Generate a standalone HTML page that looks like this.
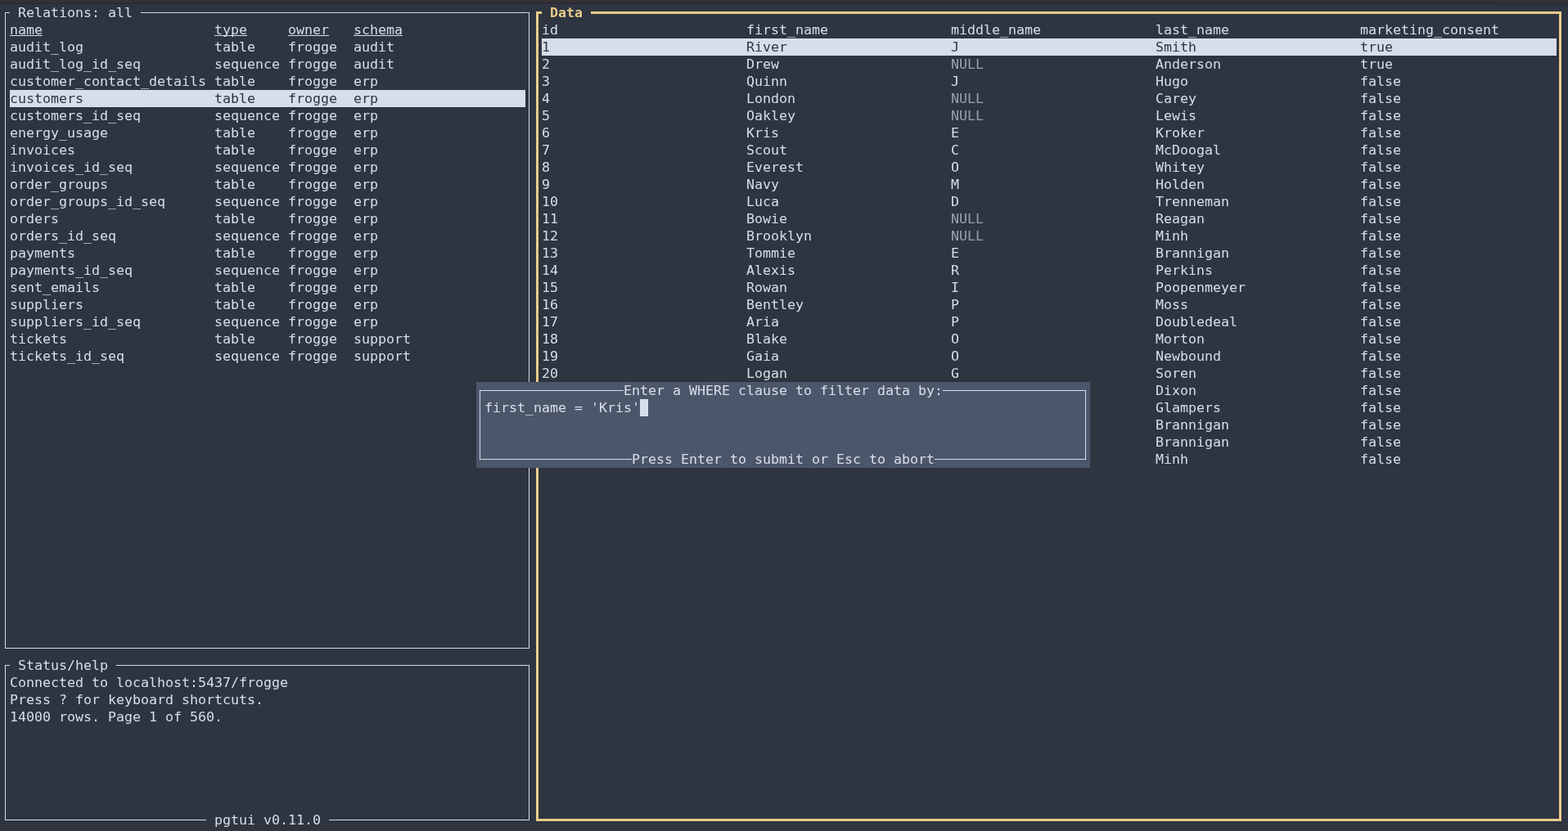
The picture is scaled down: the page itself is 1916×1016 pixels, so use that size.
<!DOCTYPE html>
<html lang="en"><head><meta charset="utf-8"><title>pgtui</title>
<style>
html,body{margin:0;padding:0;background:#2e3440;}
body{width:1916px;height:1016px;position:relative;overflow:hidden;
 font-family:"DejaVu Sans Mono","Liberation Mono",monospace;font-size:16.61px;color:#d8dee9;}
.r{position:absolute;}
.t{position:absolute;display:block;white-space:pre;
  height:21px;line-height:21px;letter-spacing:0px;font-kerning:none;font-variant-ligatures:none;}
.u{text-decoration:underline;text-decoration-thickness:1px;text-underline-offset:1px;text-decoration-skip-ink:none;}
.sel{color:#2e3440;}
.dim{color:#9ba1ad;}
.title{color:#ebcb8b;font-weight:bold;}
section{display:contents;}
main{position:absolute;left:0;top:0;width:1916px;height:1016px;will-change:transform;}
</style></head>
<body>
<main>
<div class="r" style="left:0px;top:0px;width:1916px;height:3px;background:#333333"></div>
<div class="r" style="left:0px;top:3px;width:1916px;height:2px;background:#30283a"></div>
<div class="r" style="left:1830px;top:3px;width:86px;height:1px;background:#333333"></div>
<section class="panel relations">
<div class="r" style="left:6px;top:15px;width:6px;height:1px;background:#d8dee9"></div>
<span class="t" style="left:22px;top:5px">Relations: all</span>
<div class="r" style="left:172px;top:15px;width:475px;height:1px;background:#d8dee9"></div>
<div class="r" style="left:6px;top:15px;width:1px;height:778px;background:#d8dee9"></div>
<div class="r" style="left:646px;top:15px;width:1px;height:778px;background:#d8dee9"></div>
<div class="r" style="left:6px;top:792px;width:641px;height:1px;background:#d8dee9"></div>
<span class="t u" style="left:12px;top:26px">name</span>
<span class="t u" style="left:262px;top:26px">type</span>
<span class="t u" style="left:352px;top:26px">owner</span>
<span class="t u" style="left:432px;top:26px">schema</span>
<span class="t" style="left:12px;top:47px">audit_log</span>
<span class="t" style="left:262px;top:47px">table</span>
<span class="t" style="left:352px;top:47px">frogge</span>
<span class="t" style="left:432px;top:47px">audit</span>
<span class="t" style="left:12px;top:68px">audit_log_id_seq</span>
<span class="t" style="left:262px;top:68px">sequence</span>
<span class="t" style="left:352px;top:68px">frogge</span>
<span class="t" style="left:432px;top:68px">audit</span>
<span class="t" style="left:12px;top:89px">customer_contact_details</span>
<span class="t" style="left:262px;top:89px">table</span>
<span class="t" style="left:352px;top:89px">frogge</span>
<span class="t" style="left:432px;top:89px">erp</span>
<div class="r" style="left:12px;top:110px;width:630px;height:21px;background:#d8dee9"></div>
<span class="t sel" style="left:12px;top:110px">customers</span>
<span class="t sel" style="left:262px;top:110px">table</span>
<span class="t sel" style="left:352px;top:110px">frogge</span>
<span class="t sel" style="left:432px;top:110px">erp</span>
<span class="t" style="left:12px;top:131px">customers_id_seq</span>
<span class="t" style="left:262px;top:131px">sequence</span>
<span class="t" style="left:352px;top:131px">frogge</span>
<span class="t" style="left:432px;top:131px">erp</span>
<span class="t" style="left:12px;top:152px">energy_usage</span>
<span class="t" style="left:262px;top:152px">table</span>
<span class="t" style="left:352px;top:152px">frogge</span>
<span class="t" style="left:432px;top:152px">erp</span>
<span class="t" style="left:12px;top:173px">invoices</span>
<span class="t" style="left:262px;top:173px">table</span>
<span class="t" style="left:352px;top:173px">frogge</span>
<span class="t" style="left:432px;top:173px">erp</span>
<span class="t" style="left:12px;top:194px">invoices_id_seq</span>
<span class="t" style="left:262px;top:194px">sequence</span>
<span class="t" style="left:352px;top:194px">frogge</span>
<span class="t" style="left:432px;top:194px">erp</span>
<span class="t" style="left:12px;top:215px">order_groups</span>
<span class="t" style="left:262px;top:215px">table</span>
<span class="t" style="left:352px;top:215px">frogge</span>
<span class="t" style="left:432px;top:215px">erp</span>
<span class="t" style="left:12px;top:236px">order_groups_id_seq</span>
<span class="t" style="left:262px;top:236px">sequence</span>
<span class="t" style="left:352px;top:236px">frogge</span>
<span class="t" style="left:432px;top:236px">erp</span>
<span class="t" style="left:12px;top:257px">orders</span>
<span class="t" style="left:262px;top:257px">table</span>
<span class="t" style="left:352px;top:257px">frogge</span>
<span class="t" style="left:432px;top:257px">erp</span>
<span class="t" style="left:12px;top:278px">orders_id_seq</span>
<span class="t" style="left:262px;top:278px">sequence</span>
<span class="t" style="left:352px;top:278px">frogge</span>
<span class="t" style="left:432px;top:278px">erp</span>
<span class="t" style="left:12px;top:299px">payments</span>
<span class="t" style="left:262px;top:299px">table</span>
<span class="t" style="left:352px;top:299px">frogge</span>
<span class="t" style="left:432px;top:299px">erp</span>
<span class="t" style="left:12px;top:320px">payments_id_seq</span>
<span class="t" style="left:262px;top:320px">sequence</span>
<span class="t" style="left:352px;top:320px">frogge</span>
<span class="t" style="left:432px;top:320px">erp</span>
<span class="t" style="left:12px;top:341px">sent_emails</span>
<span class="t" style="left:262px;top:341px">table</span>
<span class="t" style="left:352px;top:341px">frogge</span>
<span class="t" style="left:432px;top:341px">erp</span>
<span class="t" style="left:12px;top:362px">suppliers</span>
<span class="t" style="left:262px;top:362px">table</span>
<span class="t" style="left:352px;top:362px">frogge</span>
<span class="t" style="left:432px;top:362px">erp</span>
<span class="t" style="left:12px;top:383px">suppliers_id_seq</span>
<span class="t" style="left:262px;top:383px">sequence</span>
<span class="t" style="left:352px;top:383px">frogge</span>
<span class="t" style="left:432px;top:383px">erp</span>
<span class="t" style="left:12px;top:404px">tickets</span>
<span class="t" style="left:262px;top:404px">table</span>
<span class="t" style="left:352px;top:404px">frogge</span>
<span class="t" style="left:432px;top:404px">support</span>
<span class="t" style="left:12px;top:425px">tickets_id_seq</span>
<span class="t" style="left:262px;top:425px">sequence</span>
<span class="t" style="left:352px;top:425px">frogge</span>
<span class="t" style="left:432px;top:425px">support</span>
</section>
<section class="panel status">
<div class="r" style="left:6px;top:813px;width:6px;height:1px;background:#d8dee9"></div>
<span class="t" style="left:22px;top:803px">Status/help</span>
<div class="r" style="left:142px;top:813px;width:505px;height:1px;background:#d8dee9"></div>
<div class="r" style="left:6px;top:813px;width:1px;height:190px;background:#d8dee9"></div>
<div class="r" style="left:646px;top:813px;width:1px;height:190px;background:#d8dee9"></div>
<div class="r" style="left:6px;top:1002px;width:246px;height:1px;background:#d8dee9"></div>
<span class="t" style="left:262px;top:992px">pgtui v0.11.0</span>
<div class="r" style="left:402px;top:1002px;width:245px;height:1px;background:#d8dee9"></div>
<span class="t" style="left:12px;top:824px">Connected to localhost:5437/frogge</span>
<span class="t" style="left:12px;top:845px">Press ? for keyboard shortcuts.</span>
<span class="t" style="left:12px;top:866px">14000 rows. Page 1 of 560.</span>
</section>
<section class="panel data">
<div class="r" style="left:655px;top:14px;width:7px;height:3px;background:#ebcb8b"></div>
<span class="t title" style="left:672px;top:5px">Data</span>
<div class="r" style="left:722px;top:14px;width:1186px;height:3px;background:#ebcb8b"></div>
<div class="r" style="left:655px;top:14px;width:3px;height:990px;background:#ebcb8b"></div>
<div class="r" style="left:1905px;top:14px;width:3px;height:990px;background:#ebcb8b"></div>
<div class="r" style="left:655px;top:1001px;width:1253px;height:3px;background:#ebcb8b"></div>
<span class="t" style="left:662px;top:26px">id</span>
<span class="t" style="left:912px;top:26px">first_name</span>
<span class="t" style="left:1162px;top:26px">middle_name</span>
<span class="t" style="left:1412px;top:26px">last_name</span>
<span class="t" style="left:1662px;top:26px">marketing_consent</span>
<div class="r" style="left:662px;top:47px;width:1240px;height:21px;background:#d8dee9"></div>
<span class="t sel" style="left:662px;top:47px">1</span>
<span class="t sel" style="left:912px;top:47px">River</span>
<span class="t sel" style="left:1162px;top:47px">J</span>
<span class="t sel" style="left:1412px;top:47px">Smith</span>
<span class="t sel" style="left:1662px;top:47px">true</span>
<span class="t" style="left:662px;top:68px">2</span>
<span class="t" style="left:912px;top:68px">Drew</span>
<span class="t dim" style="left:1162px;top:68px">NULL</span>
<span class="t" style="left:1412px;top:68px">Anderson</span>
<span class="t" style="left:1662px;top:68px">true</span>
<span class="t" style="left:662px;top:89px">3</span>
<span class="t" style="left:912px;top:89px">Quinn</span>
<span class="t" style="left:1162px;top:89px">J</span>
<span class="t" style="left:1412px;top:89px">Hugo</span>
<span class="t" style="left:1662px;top:89px">false</span>
<span class="t" style="left:662px;top:110px">4</span>
<span class="t" style="left:912px;top:110px">London</span>
<span class="t dim" style="left:1162px;top:110px">NULL</span>
<span class="t" style="left:1412px;top:110px">Carey</span>
<span class="t" style="left:1662px;top:110px">false</span>
<span class="t" style="left:662px;top:131px">5</span>
<span class="t" style="left:912px;top:131px">Oakley</span>
<span class="t dim" style="left:1162px;top:131px">NULL</span>
<span class="t" style="left:1412px;top:131px">Lewis</span>
<span class="t" style="left:1662px;top:131px">false</span>
<span class="t" style="left:662px;top:152px">6</span>
<span class="t" style="left:912px;top:152px">Kris</span>
<span class="t" style="left:1162px;top:152px">E</span>
<span class="t" style="left:1412px;top:152px">Kroker</span>
<span class="t" style="left:1662px;top:152px">false</span>
<span class="t" style="left:662px;top:173px">7</span>
<span class="t" style="left:912px;top:173px">Scout</span>
<span class="t" style="left:1162px;top:173px">C</span>
<span class="t" style="left:1412px;top:173px">McDoogal</span>
<span class="t" style="left:1662px;top:173px">false</span>
<span class="t" style="left:662px;top:194px">8</span>
<span class="t" style="left:912px;top:194px">Everest</span>
<span class="t" style="left:1162px;top:194px">O</span>
<span class="t" style="left:1412px;top:194px">Whitey</span>
<span class="t" style="left:1662px;top:194px">false</span>
<span class="t" style="left:662px;top:215px">9</span>
<span class="t" style="left:912px;top:215px">Navy</span>
<span class="t" style="left:1162px;top:215px">M</span>
<span class="t" style="left:1412px;top:215px">Holden</span>
<span class="t" style="left:1662px;top:215px">false</span>
<span class="t" style="left:662px;top:236px">10</span>
<span class="t" style="left:912px;top:236px">Luca</span>
<span class="t" style="left:1162px;top:236px">D</span>
<span class="t" style="left:1412px;top:236px">Trenneman</span>
<span class="t" style="left:1662px;top:236px">false</span>
<span class="t" style="left:662px;top:257px">11</span>
<span class="t" style="left:912px;top:257px">Bowie</span>
<span class="t dim" style="left:1162px;top:257px">NULL</span>
<span class="t" style="left:1412px;top:257px">Reagan</span>
<span class="t" style="left:1662px;top:257px">false</span>
<span class="t" style="left:662px;top:278px">12</span>
<span class="t" style="left:912px;top:278px">Brooklyn</span>
<span class="t dim" style="left:1162px;top:278px">NULL</span>
<span class="t" style="left:1412px;top:278px">Minh</span>
<span class="t" style="left:1662px;top:278px">false</span>
<span class="t" style="left:662px;top:299px">13</span>
<span class="t" style="left:912px;top:299px">Tommie</span>
<span class="t" style="left:1162px;top:299px">E</span>
<span class="t" style="left:1412px;top:299px">Brannigan</span>
<span class="t" style="left:1662px;top:299px">false</span>
<span class="t" style="left:662px;top:320px">14</span>
<span class="t" style="left:912px;top:320px">Alexis</span>
<span class="t" style="left:1162px;top:320px">R</span>
<span class="t" style="left:1412px;top:320px">Perkins</span>
<span class="t" style="left:1662px;top:320px">false</span>
<span class="t" style="left:662px;top:341px">15</span>
<span class="t" style="left:912px;top:341px">Rowan</span>
<span class="t" style="left:1162px;top:341px">I</span>
<span class="t" style="left:1412px;top:341px">Poopenmeyer</span>
<span class="t" style="left:1662px;top:341px">false</span>
<span class="t" style="left:662px;top:362px">16</span>
<span class="t" style="left:912px;top:362px">Bentley</span>
<span class="t" style="left:1162px;top:362px">P</span>
<span class="t" style="left:1412px;top:362px">Moss</span>
<span class="t" style="left:1662px;top:362px">false</span>
<span class="t" style="left:662px;top:383px">17</span>
<span class="t" style="left:912px;top:383px">Aria</span>
<span class="t" style="left:1162px;top:383px">P</span>
<span class="t" style="left:1412px;top:383px">Doubledeal</span>
<span class="t" style="left:1662px;top:383px">false</span>
<span class="t" style="left:662px;top:404px">18</span>
<span class="t" style="left:912px;top:404px">Blake</span>
<span class="t" style="left:1162px;top:404px">O</span>
<span class="t" style="left:1412px;top:404px">Morton</span>
<span class="t" style="left:1662px;top:404px">false</span>
<span class="t" style="left:662px;top:425px">19</span>
<span class="t" style="left:912px;top:425px">Gaia</span>
<span class="t" style="left:1162px;top:425px">O</span>
<span class="t" style="left:1412px;top:425px">Newbound</span>
<span class="t" style="left:1662px;top:425px">false</span>
<span class="t" style="left:662px;top:446px">20</span>
<span class="t" style="left:912px;top:446px">Logan</span>
<span class="t" style="left:1162px;top:446px">G</span>
<span class="t" style="left:1412px;top:446px">Soren</span>
<span class="t" style="left:1662px;top:446px">false</span>
<span class="t" style="left:1412px;top:467px">Dixon</span>
<span class="t" style="left:1662px;top:467px">false</span>
<span class="t" style="left:1412px;top:488px">Glampers</span>
<span class="t" style="left:1662px;top:488px">false</span>
<span class="t" style="left:1412px;top:509px">Brannigan</span>
<span class="t" style="left:1662px;top:509px">false</span>
<span class="t" style="left:1412px;top:530px">Brannigan</span>
<span class="t" style="left:1662px;top:530px">false</span>
<span class="t" style="left:1412px;top:551px">Minh</span>
<span class="t" style="left:1662px;top:551px">false</span>
</section>
<section class="panel popup">
<div class="r" style="left:582px;top:467px;width:750px;height:105px;background:#4c566a"></div>
<div class="r" style="left:586px;top:477px;width:176px;height:1px;background:#d8dee9"></div>
<span class="t" style="left:762px;top:467px">Enter a WHERE clause to filter data by:</span>
<div class="r" style="left:1152px;top:477px;width:175px;height:1px;background:#d8dee9"></div>
<div class="r" style="left:586px;top:477px;width:1px;height:85px;background:#d8dee9"></div>
<div class="r" style="left:1326px;top:477px;width:1px;height:85px;background:#d8dee9"></div>
<div class="r" style="left:586px;top:561px;width:186px;height:1px;background:#d8dee9"></div>
<span class="t" style="left:772px;top:551px">Press Enter to submit or Esc to abort</span>
<div class="r" style="left:1142px;top:561px;width:185px;height:1px;background:#d8dee9"></div>
<span class="t" style="left:592px;top:488px">first_name = 'Kris'</span>
<div class="r" style="left:782px;top:488px;width:10px;height:21px;background:#d8dee9"></div>
</section>
</main>
</body></html>
